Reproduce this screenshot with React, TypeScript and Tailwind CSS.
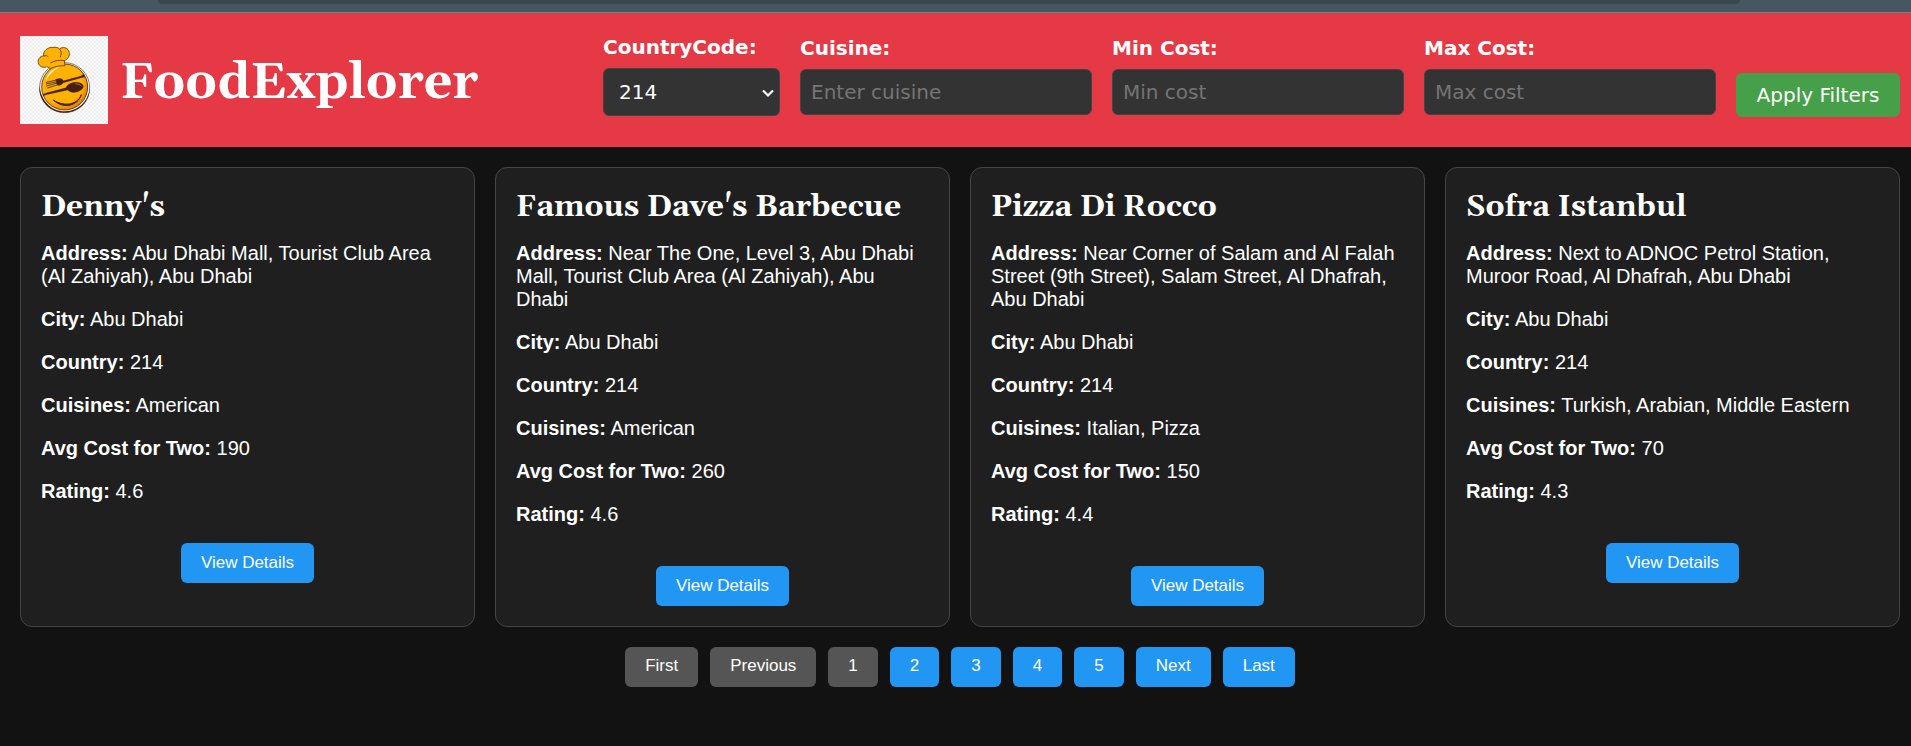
import { useState } from "react";

type Restaurant = {
  name: string;
  address: string;
  city: string;
  country: string;
  cuisines: string;
  cost: string;
  rating: string;
};

const restaurants: Restaurant[] = [
  {
    name: "Denny's",
    address: "Abu Dhabi Mall, Tourist Club Area (Al Zahiyah), Abu Dhabi",
    city: "Abu Dhabi",
    country: "214",
    cuisines: "American",
    cost: "190",
    rating: "4.6",
  },
  {
    name: "Famous Dave's Barbecue",
    address: "Near The One, Level 3, Abu Dhabi Mall, Tourist Club Area (Al Zahiyah), Abu Dhabi",
    city: "Abu Dhabi",
    country: "214",
    cuisines: "American",
    cost: "260",
    rating: "4.6",
  },
  {
    name: "Pizza Di Rocco",
    address: "Near Corner of Salam and Al Falah Street (9th Street), Salam Street, Al Dhafrah, Abu Dhabi",
    city: "Abu Dhabi",
    country: "214",
    cuisines: "Italian, Pizza",
    cost: "150",
    rating: "4.4",
  },
  {
    name: "Sofra Istanbul",
    address: "Next to ADNOC Petrol Station, Muroor Road, Al Dhafrah, Abu Dhabi",
    city: "Abu Dhabi",
    country: "214",
    cuisines: "Turkish, Arabian, Middle Eastern",
    cost: "70",
    rating: "4.3",
  },
];

function Logo() {
  return (
    <svg className="size-22 shrink-0" viewBox="30 33 264 264" role="img" aria-label="FoodExplorer logo">
      <defs>
        <pattern id="checks" width="12" height="12" patternUnits="userSpaceOnUse">
          <rect width="12" height="12" fill="#fbfbfb" />
          <rect width="6" height="6" fill="#eeeeee" />
          <rect x="6" y="6" width="6" height="6" fill="#eeeeee" />
        </pattern>
        <radialGradient id="face" cx="0.42" cy="0.4" r="0.62">
          <stop offset="0.75" stopColor="#ffb300" />
          <stop offset="1" stopColor="#e57a00" />
        </radialGradient>
      </defs>
      <rect x="30" y="33" width="264" height="264" fill="url(#checks)" />
      <circle cx="164" cy="188" r="75" fill="#fff" stroke="#7a6050" strokeWidth="2.5" />
      <path d="M88 180C84 230 122 264 166 263C208 262 240 230 240 186C236 228 206 257 166 259C126 260 92 228 88 180Z" fill="#4a2410" />
      <circle cx="164" cy="186" r="69" fill="url(#face)" stroke="#4a2410" strokeWidth="2.5" />
      <path d="M107 168C111 145 128 130 150 126C132 134 118 148 107 168Z" fill="#fff3cf" />
      <g fill="#ffb300" stroke="#5c3a0e" strokeWidth="2.5" strokeLinejoin="round">
        <path d="M121 131C115 126 111 124 104 127C88 128 80 112 87 101C91 95 95 93 101 93C98 77 114 66 129 67C138 66 145 68 149 72C158 64 172 68 176 77C181 90 177 101 163 107L165 122C149 122 135 124 121 131Z" />
        <path d="M101 93C107 91 112 92 115 96M149 72C155 79 155 89 150 97M121 114C134 107 148 104 163 107" fill="none" strokeWidth="2.5" />
      </g>
      <g fill="#46200c" stroke="#46200c" strokeLinecap="round">
        <path d="M158 168L211 154L222 148L224 156L214 158L160 173Z" strokeWidth="1" />
        <path d="M138 163C150 158 158 160 160 168C160 178 152 182 144 181C139 179 139 168 138 163Z" strokeWidth="1" />
        <path d="M140 165L109 172M141 170L109 177M142 174L110 183M144 179L113 189" strokeWidth="2.5" fill="none" />
        <path d="M168 188C174 174 196 169 211 174C220 178 222 184 218 190C210 202 184 208 173 195L108 209L99 213L101 207L112 203Z" strokeWidth="1" />
        <path d="M131 226C158 252 202 245 214 209C208 226 194 234 178 237C160 239 146 235 131 226Z" strokeWidth="3" strokeLinejoin="round" />
      </g>
      <path d="M196 177C204 176 211 179 214 184" fill="none" stroke="#9a765c" strokeWidth="3" />
    </svg>
  );
}

const controlClass =
  "rounded-md border border-[#444] bg-[#333] text-[20px] text-white outline-none placeholder:text-[#757575]";

function TextField({ id, label, placeholder, type = "text" }: { id: string; label: string; placeholder: string; type?: string }) {
  return (
    <div className="flex flex-col gap-[10px] pb-2">
      <label htmlFor={id} className="text-[20px] leading-[22px] font-bold">
        {label}
      </label>
      <input id={id} type={type} placeholder={placeholder} className={`${controlClass} h-[46px] w-[292px] px-[10px]`} />
    </div>
  );
}

function Row({ label, value }: { label: string; value: string }) {
  return (
    <p>
      <strong>{label}:</strong> {value}
    </p>
  );
}

function Card({ item }: { item: Restaurant }) {
  return (
    <article className="rounded-xl border border-[#444] bg-[#1f1f1f] p-5 text-[20px] leading-[23px]">
      <h2 className="font-['Georgia','Gelasio','DejaVu_Serif',serif] text-[30px] leading-[38px] font-bold">{item.name}</h2>
      <div className="mt-4 flex flex-col gap-5">
        <Row label="Address" value={item.address} />
        <Row label="City" value={item.city} />
        <Row label="Country" value={item.country} />
        <Row label="Cuisines" value={item.cuisines} />
        <Row label="Avg Cost for Two" value={item.cost} />
        <Row label="Rating" value={item.rating} />
      </div>
      <div className="mt-10 flex justify-center">
        <button type="button" className="h-10 rounded-md bg-[#2196f3] px-5 pb-0.5 text-[17px]">
          View Details
        </button>
      </div>
    </article>
  );
}

export default function App() {
  const [page, setPage] = useState(1);
  const go = (n: number) => setPage(Math.min(5, Math.max(1, n)));
  const pages = [
    { label: "First", target: 1, off: page === 1 },
    { label: "Previous", target: page - 1, off: page === 1 },
    ...[1, 2, 3, 4, 5].map((n) => ({ label: String(n), target: n, off: page === n })),
    { label: "Next", target: page + 1, off: page === 5 },
    { label: "Last", target: 5, off: page === 5 },
  ];

  return (
    <div className="min-h-screen bg-[#121212] font-['Liberation_Sans',Arial,sans-serif] text-white">
      <div className="h-[13px] border-b border-[#6f8087] bg-[#455760] pr-[171px] pl-[158px]">
        <div className="h-1 rounded-b-xl bg-[#3a474d]" />
      </div>

      <header className="flex items-center justify-between bg-[#e63946] py-[23px] pr-[11px] pl-5">
        <div className="flex items-center gap-3">
          <Logo />
          <h1 className="pt-2 font-['Georgia','Gelasio','DejaVu_Serif',serif] text-[50px] leading-[60px] font-bold">FoodExplorer</h1>
        </div>
        <form
          className="flex items-center gap-5 font-['Verdana','DejaVu_Sans',sans-serif]"
          onSubmit={(e) => e.preventDefault()}
        >
          <div className="flex flex-col gap-[10px] pb-2">
            <label htmlFor="country" className="text-[20px] leading-[22px] font-bold">
              CountryCode:
            </label>
            <div className="relative">
              <select id="country" defaultValue="214" className={`${controlClass} h-12 w-[177px] appearance-none px-[15px]`}>
                <option value="214">214</option>
              </select>
              <svg className="pointer-events-none absolute top-5 right-1 h-[10px] w-4" viewBox="0 0 16 10" fill="none" aria-hidden="true">
                <path d="M3 2.5L8 7.5L13 2.5" stroke="#fff" strokeWidth="2.2" />
              </svg>
            </div>
          </div>
          <TextField id="cuisine" label="Cuisine:" placeholder="Enter cuisine" />
          <TextField id="min-cost" label="Min Cost:" placeholder="Min cost" type="number" />
          <TextField id="max-cost" label="Max Cost:" placeholder="Max cost" type="number" />
          <button type="submit" className="mt-[30px] h-11 w-[164px] rounded-md bg-[#45a049] text-[20px] whitespace-nowrap">
            Apply Filters
          </button>
        </form>
      </header>

      <main className="pt-5 pr-[11px] pb-5 pl-5">
        <div className="grid grid-cols-4 gap-5">
          {restaurants.map((item) => (
            <Card key={item.name} item={item} />
          ))}
        </div>
        <nav aria-label="Pagination" className="mt-5 flex justify-center gap-3">
          {pages.map((p) => (
            <button
              key={p.label}
              type="button"
              disabled={p.off}
              onClick={() => go(p.target)}
              className="h-10 rounded-md bg-[#2196f3] px-5 pb-0.5 text-[17px] disabled:bg-[#555]"
            >
              {p.label}
            </button>
          ))}
        </nav>
      </main>
    </div>
  );
}
